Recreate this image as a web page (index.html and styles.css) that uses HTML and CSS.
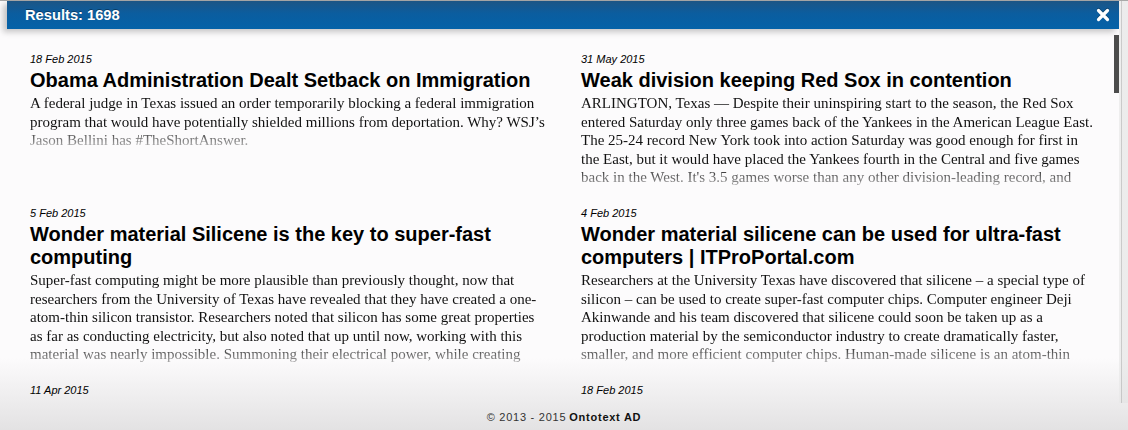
FILE: index.html
```html
<!DOCTYPE html>
<html lang="en">
<head>
<meta charset="utf-8">
<title>Results</title>
<link rel="stylesheet" href="styles.css">
</head>
<body>
<div class="app">
  <div class="panel">
    <header class="bar">
      <span class="count">Results: 1698</span>
      <button class="close" aria-label="Close">
        <svg width="14" height="14" viewBox="0 0 14 14"><path d="M2.5 2.5 L11.5 11.5 M11.5 2.5 L2.5 11.5" stroke="#fff" stroke-width="3.2" stroke-linecap="round"/></svg>
      </button>
    </header>
    <div class="results">
      <div class="grid">
        <article class="item">
          <div class="date">18 Feb 2015</div>
          <h2 class="title">Obama Administration Dealt Setback on Immigration</h2>
          <p class="body">A federal judge in Texas issued an order temporarily blocking a federal immigration<br>program that would have potentially shielded millions from deportation. Why? WSJ’s<br>Jason Bellini has #TheShortAnswer.</p>
        </article>
        <article class="item">
          <div class="date">31 May 2015</div>
          <h2 class="title">Weak division keeping Red Sox in contention</h2>
          <p class="body">ARLINGTON, Texas — Despite their uninspiring start to the season, the Red Sox<br>entered Saturday only three games back of the Yankees in the American League East.<br>The 25-24 record New York took into action Saturday was good enough for first in<br>the East, but it would have placed the Yankees fourth in the Central and five games<br>back in the West. It's 3.5 games worse than any other division-leading record, and<br>the Red Sox have had plenty of chances to close the gap.</p>
        </article>
        <article class="item">
          <div class="date">5 Feb 2015</div>
          <h2 class="title">Wonder material Silicene is the key to super-fast computing</h2>
          <p class="body">Super-fast computing might be more plausible than previously thought, now that<br>researchers from the University of Texas have revealed that they have created a one-<br>atom-thin silicon transistor. Researchers noted that silicon has some great properties<br>as far as conducting electricity, but also noted that up until now, working with this<br>material was nearly impossible. Summoning their electrical power, while creating<br>a material just one atom thick, was the hardest part.</p>
        </article>
        <article class="item">
          <div class="date">4 Feb 2015</div>
          <h2 class="title">Wonder material silicene can be used for ultra-fast computers | ITProPortal.com</h2>
          <p class="body">Researchers at the University Texas have discovered that silicene – a special type of<br>silicon – can be used to create super-fast computer chips. Computer engineer Deji<br>Akinwande and his team discovered that silicene could soon be taken up as a<br>production material by the semiconductor industry to create dramatically faster,<br>smaller, and more efficient computer chips. Human-made silicene is an atom-thin<br>form of silicon that has been studied for years.</p>
        </article>
        <article class="item">
          <div class="date">11 Apr 2015</div>
        </article>
        <article class="item">
          <div class="date">18 Feb 2015</div>
        </article>
      </div>
      <div class="thumb"></div>
    </div>
  </div>
  <div class="gutter"></div>
</div>
<footer class="footer">© 2013 - 2015 <b>Ontotext AD</b></footer>
</body>
</html>
```
FILE: styles.css
```css
html, body {
  margin: 0;
  padding: 0;
}

body {
  height: 430px;
  overflow: hidden;
  display: flex;
  flex-direction: column;
  font-family: "Liberation Sans", Arial, sans-serif;
  color: #000;
  background: linear-gradient(to bottom, #fcfbfc 0, #fcfbfc 358px, #e3e2e3 430px);
}

.app {
  flex: 1;
  min-height: 0;
  display: flex;
  border-top: 1px solid #a9a9a9;
}

.panel {
  flex: 1;
  min-width: 0;
  margin-left: 7px;
  display: flex;
  flex-direction: column;
}

.bar {
  height: 28px;
  flex: none;
  display: flex;
  align-items: center;
  justify-content: space-between;
  padding: 0 9px 0 18px;
  background: linear-gradient(to bottom, #1c5585 0, #0b5d9f 45%, #0462a8 100%);
  box-shadow: -4px 3px 6px rgba(0, 0, 0, 0.22);
  color: #fff;
}

.count {
  font-weight: bold;
  font-size: 14.7px;
  text-shadow: 0 -1px 0 rgba(0, 0, 0, 0.35);
}

.close {
  border: 0;
  padding: 0;
  background: none;
  width: 14px;
  height: 14px;
  display: flex;
  filter: drop-shadow(0 -1px 0 rgba(0, 0, 0, 0.3));
}

.results {
  flex: 1;
  min-height: 0;
  overflow: hidden;
  position: relative;
  padding: 23px 7px 0 23px;
}

.grid {
  display: grid;
  grid-template-columns: 531px 531px;
  column-gap: 20px;
  row-gap: 16px;
}

.date {
  font-style: italic;
  font-size: 11px;
  line-height: 14px;
  margin-bottom: 3px;
}

.title {
  margin: 0;
  font-size: 20px;
  line-height: 23px;
  font-weight: bold;
}

.body {
  margin: 2px 0 0;
  max-height: 96px;
  overflow: hidden;
  white-space: nowrap;
  font-family: "Liberation Serif", "Times New Roman", serif;
  font-size: 15px;
  line-height: 18.5px;
  color: #111;
  -webkit-mask-image: linear-gradient(to bottom, #000 0, #000 calc(100% - 24px), rgba(0, 0, 0, 0.42) calc(100% - 6px), rgba(0, 0, 0, 0.1) 100%);
  mask-image: linear-gradient(to bottom, #000 0, #000 calc(100% - 24px), rgba(0, 0, 0, 0.42) calc(100% - 6px), rgba(0, 0, 0, 0.1) 100%);
}

.thumb {
  position: absolute;
  top: 6px;
  right: 0;
  width: 5px;
  height: 58px;
  background: #4c4c4c;
}

.gutter {
  width: 9px;
  flex: none;
  background: linear-gradient(to right, rgba(232, 232, 232, 0.7) 0 2px, rgba(190, 190, 190, 0.8) 2px 3px, rgba(226, 226, 226, 0.6) 3px);
}

.footer {
  height: 27px;
  flex: none;
  display: flex;
  align-items: center;
  justify-content: center;
  font-size: 11px;
  letter-spacing: 0.75px;
  color: #333;
}

.footer b {
  color: #111;
  margin-left: 3px;
}
```
